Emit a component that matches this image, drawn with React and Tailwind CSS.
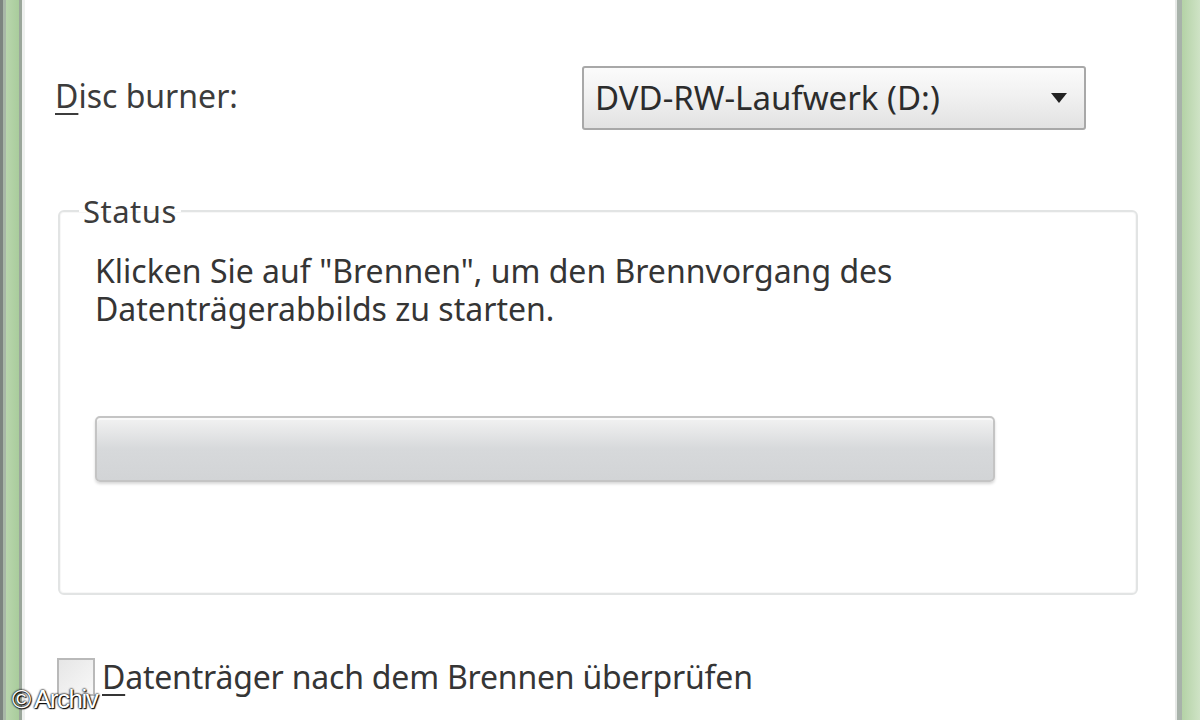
export default function App() {
  const font = { fontFamily: '"Noto Sans", "Open Sans", sans-serif' };
  return (
    <div className="relative flex h-[720px] w-[1200px] overflow-hidden bg-white" style={font}>
      {/* left window frame */}
      <div className="flex h-full w-[25px] shrink-0">
        <div className="w-[3px] bg-[#7d8580]" />
        <div className="w-[3px] bg-[#a9b8a8]" />
        <div className="w-[13px] bg-gradient-to-r from-[#b9d6ad] to-[#a9cc9c]" />
        <div className="w-[3px] bg-[#9aa69a]" />
        <div className="w-[3px] bg-[#eef0ee]" />
      </div>

      {/* content */}
      <div className="flex flex-1 flex-col pl-[30px]">
        <div className="mt-[66px] flex h-[64px] items-center">
          <div className="w-[527px] pb-[4px] text-[32px] text-[#3c3c3c]">
            <span className="underline decoration-[2px] underline-offset-[5px]">D</span>isc burner:
          </div>
          <div className="flex h-[64px] w-[504px] items-center rounded-[3px] border-2 border-[#a8a8a8] bg-gradient-to-b from-[#fbfbfb] via-[#f0f0f0] to-[#e2e2e2] pl-[11px] pr-[16px]">
            <span className="flex-1 text-[33px] text-[#2c2c2c]">DVD-RW-Laufwerk (D:)</span>
            <svg width="18" height="12" viewBox="0 0 18 12">
              <polygon points="1,1 17,1 9,11" fill="#222" />
            </svg>
          </div>
        </div>

        <fieldset className="ml-[3px] mt-[64px] h-[401px] w-[1080px] rounded-[6px] border-2 border-[#e2e4e4] shadow-[inset_0_0_0_1px_#f7f7f7]">
          <legend className="ml-[19px] px-[4px] text-[31px] leading-[34px] tracking-[0.5px] text-[#3c3c3c]">Status</legend>
          <div className="pl-[35px]">
            <div className="mt-[24px] text-[32px] leading-[38px] text-[#353535]">
              <div>Klicken Sie auf "Brennen", um den Brennvorgang des</div>
              <div>Datenträgerabbilds zu starten.</div>
            </div>
            <div className="mt-[88px] h-[66px] w-[900px] rounded-[5px] border-2 border-[#c4c4c4] bg-gradient-to-b from-[#f2f2f2] via-[#d7d9db] to-[#d2d4d6] shadow-[inset_0_2px_0_#fafafa,0_2px_3px_#d8d8d8]" />
          </div>
        </fieldset>

        <div className="mt-[58px] flex items-center">
          <div className="ml-[2px] h-[38px] w-[38px] border-2 border-[#b9b9b9] bg-gradient-to-br from-[#e6e6e6] to-[#f8f8f8]" />
          <div className="ml-[7px] text-[32px] tracking-[-0.2px] text-[#353535]">
            <span className="underline decoration-[2px] underline-offset-[5px]">D</span>atenträger nach dem Brennen überprüfen
          </div>
        </div>
      </div>

      {/* right window frame */}
      <div className="flex h-full w-[25px] shrink-0">
        <div className="w-[2px] bg-[#e6e8e6]" />
        <div className="w-[5px] bg-[#a8b2aa]" />
        <div className="w-[18px] bg-gradient-to-r from-[#b4d2a6] to-[#cfe3c6]" />
      </div>

      {/* watermark */}
      <div
        className="absolute bottom-[8px] left-[12px] text-[26px] leading-none tracking-[-1.5px] text-white"
        style={{ fontFamily: '"Liberation Sans", Arial, sans-serif', textShadow: '0 0 2px #000, 0 0 2px #000, 1px 1px 1px #000' }}
      >
        © Archiv
      </div>
    </div>
  );
}
